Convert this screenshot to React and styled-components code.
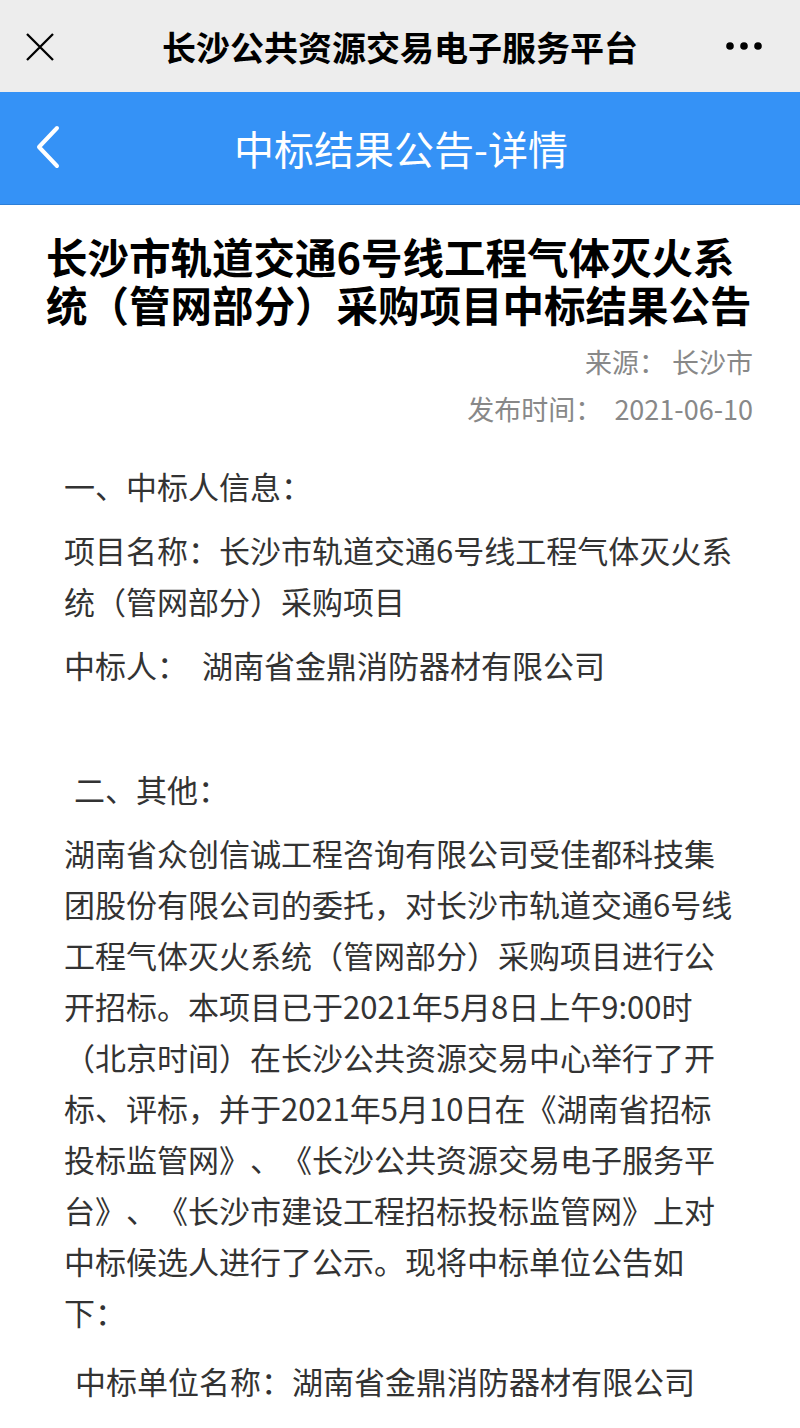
import React from "react";
import styled, { createGlobalStyle } from "styled-components";

const GlobalStyle = createGlobalStyle`
  html, body {
    margin: 0;
    padding: 0;
    background: #ffffff;
  }
  body {
    font-family: "Noto Sans CJK SC", "Noto Sans", sans-serif;
    text-spacing-trim: space-all;
  }
`;

const titleLines = [
  "长沙市轨道交通6号线工程气体灭火系",
  "统（管网部分）采购项目中标结果公告",
];

const bodyLines = [
  "湖南省众创信诚工程咨询有限公司受佳都科技集",
  "团股份有限公司的委托，对长沙市轨道交通6号线",
  "工程气体灭火系统（管网部分）采购项目进行公",
  "开招标。本项目已于2021年5月8日上午9:00时",
  "（北京时间）在长沙公共资源交易中心举行了开",
  "标、评标，并于2021年5月10日在《湖南省招标",
  "投标监管网》、《长沙公共资源交易电子服务平",
  "台》、《长沙市建设工程招标投标监管网》上对",
  "中标候选人进行了公示。现将中标单位公告如",
  "下：",
];

const withBreaks = (lines) =>
  lines.map((line, i) => (
    <React.Fragment key={i}>
      {line}
      {i < lines.length - 1 && <br />}
    </React.Fragment>
  ));

const CloseIcon = () => (
  <svg width="28" height="28" viewBox="0 0 28 28">
    <path d="M1 1 L27 27 M27 1 L1 27" stroke="#000" strokeWidth="2.3" fill="none" />
  </svg>
);

const MoreIcon = () => (
  <svg width="36" height="10" viewBox="0 0 36 10">
    <circle cx="4" cy="5" r="3.8" fill="#000" />
    <circle cx="18" cy="5" r="3.8" fill="#000" />
    <circle cx="32" cy="5" r="3.8" fill="#000" />
  </svg>
);

const BackIcon = () => (
  <svg width="26" height="46" viewBox="0 0 26 46">
    <polyline
      points="21,3 3,22 21,41"
      stroke="#fff"
      strokeWidth="4"
      strokeLinecap="round"
      strokeLinejoin="round"
      fill="none"
    />
  </svg>
);

const App = () => {
  return (
    <Page>
      <GlobalStyle />
      <TopBar>
        <LeftSlot>
          <CloseIcon />
        </LeftSlot>
        <TopTitle>长沙公共资源交易电子服务平台</TopTitle>
        <RightSlot>
          <MoreIcon />
        </RightSlot>
      </TopBar>

      <NavBar>
        <BackSlot>
          <BackIcon />
        </BackSlot>
        <NavTitle>中标结果公告-详情</NavTitle>
        <span />
      </NavBar>

      <Article>
        <Headline>{withBreaks(titleLines)}</Headline>
        <Meta>
          <MetaRow>来源：&nbsp;长沙市</MetaRow>
          <MetaRow>发布时间：&nbsp;&nbsp;2021-06-10</MetaRow>
        </Meta>

        <Body>
          <Para>一、中标人信息：</Para>
          <Para>
            项目名称：长沙市轨道交通6号线工程气体灭火系
            <br />
            统（管网部分）采购项目
          </Para>
          <Para>中标人：&nbsp;&nbsp;湖南省金鼎消防器材有限公司</Para>
          <Blank />
          <Para indent={10}>二、其他：</Para>
          <Para>{withBreaks(bodyLines)}</Para>
          <Para indent={11} gap={18}>中标单位名称：湖南省金鼎消防器材有限公司</Para>
        </Body>
      </Article>
    </Page>
  );
};

const Page = styled.div`
  width: 800px;
  min-height: 1428px;
  background: #fff;
  overflow: hidden;
`;

const TopBar = styled.header`
  height: 92px;
  background: #ededed;
  display: grid;
  grid-template-columns: 1fr auto 1fr;
  align-items: center;
`;

const LeftSlot = styled.div`
  display: flex;
  padding-left: 26px;
  padding-top: 2px;
`;

const RightSlot = styled.div`
  display: flex;
  justify-content: flex-end;
  padding-right: 38px;
`;

const TopTitle = styled.h2`
  margin: 0;
  font-size: 34px;
  font-weight: 700;
  color: #000;
  line-height: 1;
  padding-top: 2px;
`;

const NavBar = styled.nav`
  height: 112px;
  background: #3592f6;
  border-bottom: 1px solid #2c7fd8;
  display: grid;
  grid-template-columns: 1fr auto 1fr;
  align-items: center;
`;

const BackSlot = styled.div`
  display: flex;
  padding-left: 36px;
`;

const NavTitle = styled.h1`
  margin: 0;
  font-size: 40px;
  font-weight: 400;
  color: #fff;
  line-height: 1;
  padding-left: 2px;
`;

const Article = styled.main`
  padding: 27px 0 0;
`;

const Headline = styled.h3`
  margin: 0;
  padding: 0 30px 0 46px;
  font-size: 41.5px;
  font-weight: 700;
  line-height: 48px;
  color: #000;
`;

const Meta = styled.div`
  margin-top: 10px;
  padding-right: 47px;
  display: flex;
  flex-direction: column;
  align-items: flex-end;
`;

const MetaRow = styled.div`
  font-size: 27px;
  line-height: 47px;
  color: #888;
`;

const Body = styled.section`
  padding: 28px 30px 0 64px;
  color: #333;
  font-size: 31px;
  line-height: 51px;
`;

const Para = styled.p`
  margin: ${(p) => p.gap || 13}px 0 0;
  padding-left: ${(p) => p.indent || 0}px;
  &:first-child {
    margin-top: 0;
  }
`;

const Blank = styled.div`
  height: 60px;
`;

export default App;
